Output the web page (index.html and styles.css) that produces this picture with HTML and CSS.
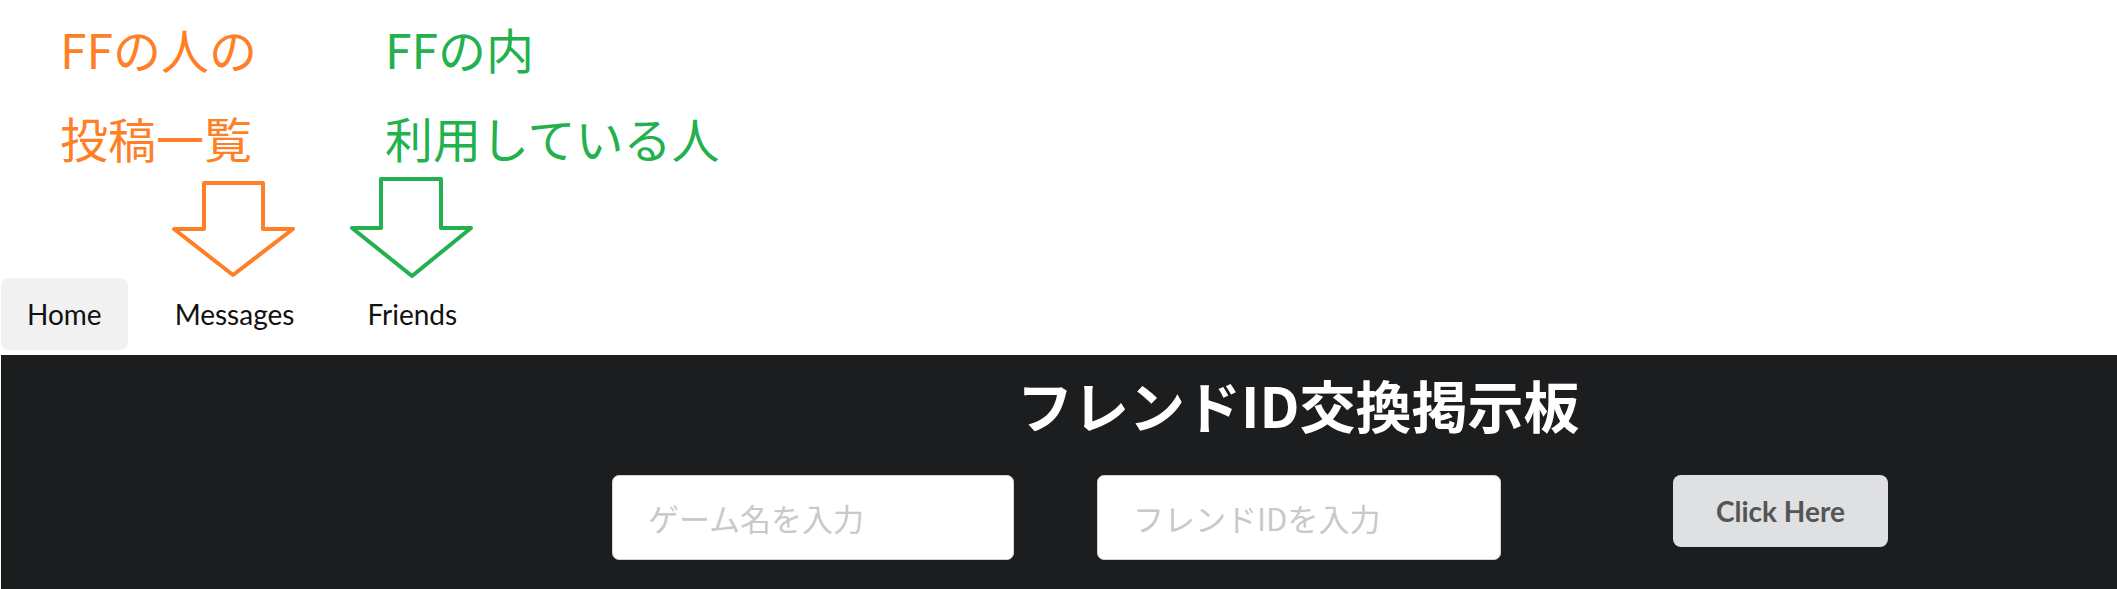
FILE: index.html
```html
<!DOCTYPE html>
<html lang="ja">
<head>
<meta charset="utf-8">
<title>フレンドID交換掲示板</title>
<link rel="stylesheet" href="styles.css">
</head>
<body>
<div class="notes">
  <div class="note note-orange">
    <div class="note-line">FFの人の</div>
    <div class="note-line">投稿一覧</div>
  </div>
  <div class="note note-green">
    <div class="note-line">FFの内</div>
    <div class="note-line">利用している人</div>
  </div>
</div>
<div class="arrows">
  <svg class="arrows-svg" width="500" height="102" viewBox="0 0 500 102">
    <polygon points="203,7 262,7 262,53 292,53 232,99 173,53 203,53" fill="none" stroke="#ff7f27" stroke-width="4" stroke-linejoin="round"/>
    <polygon points="380,3 440,3 440,52 470,52 411,100 351,52 380,52" fill="none" stroke="#22b14c" stroke-width="4" stroke-linejoin="round"/>
  </svg>
</div>
<nav class="nav">
  <a class="nav-item active">Home</a>
  <a class="nav-item">Messages</a>
  <a class="nav-item">Friends</a>
</nav>
<section class="board">
  <h1 class="board-title">フレンドID交換掲示板</h1>
  <form class="board-form">
    <input class="field field-game" type="text" placeholder="ゲーム名を入力">
    <input class="field field-id" type="text" placeholder="フレンドIDを入力">
    <button class="submit" type="button">Click Here</button>
  </form>
</section>
</body>
</html>
```
FILE: styles.css
```css
html, body {
  margin: 0;
  padding: 0;
  background: #ffffff;
}
body {
  padding-left: 1px;
  font-family: Lato, "Noto Sans CJK JP", sans-serif;
  overflow: hidden;
}
.notes {
  display: flex;
  padding-left: 59px;
  padding-top: 4px;
  height: 176px;
  box-sizing: border-box;
  overflow: visible;
}
.note {
  font-family: "Noto Sans CJK JP", sans-serif;
  font-size: 48px;
  font-weight: 400;
}
.note-orange {
  color: #ff7f27;
  width: 325px;
}
.note-green {
  color: #22b14c;
}
.note-line {
  line-height: 89px;
  white-space: nowrap;
}
.arrows {
  height: 102px;
}
.arrows-svg {
  display: block;
}
.nav {
  display: flex;
  gap: 21px;
  height: 72px;
}
.nav-item {
  display: block;
  padding: 0 26px;
  line-height: 72px;
  font-family: Lato, sans-serif;
  font-size: 28px;
  color: #111111;
  border-radius: 8px;
}
.nav-item.active {
  background: #f1f1f1;
}
.board {
  margin-top: 5px;
  background: #1c1d1f;
  height: 260px;
  padding-top: 13px;
  box-sizing: border-box;
}
.board-title {
  margin: 0 0 0 1016px;
  font-family: "Noto Sans CJK JP", sans-serif;
  font-weight: 700;
  font-size: 56px;
  line-height: 72px;
  color: #ffffff;
  white-space: nowrap;
}
.board-form {
  display: flex;
  align-items: flex-start;
  margin: 35px 0 0 611px;
}
.field {
  box-sizing: border-box;
  height: 85px;
  border: 1px solid #d3d3d3;
  border-radius: 7px;
  background: #ffffff;
  padding: 0 0 0 35px;
  font-family: "Noto Sans CJK JP", sans-serif;
  font-size: 31px;
  color: #333333;
  outline: none;
}
.field::placeholder {
  color: #c9c9c9;
}
.field-game {
  width: 402px;
}
.field-id {
  width: 404px;
  margin-left: 83px;
}
.submit {
  width: 215px;
  height: 72px;
  margin-left: 172px;
  border: none;
  border-radius: 8px;
  background: #dfe0e2;
  color: #555555;
  font-family: Lato, sans-serif;
  font-weight: 700;
  font-size: 28px;
  padding: 0;
}
```
